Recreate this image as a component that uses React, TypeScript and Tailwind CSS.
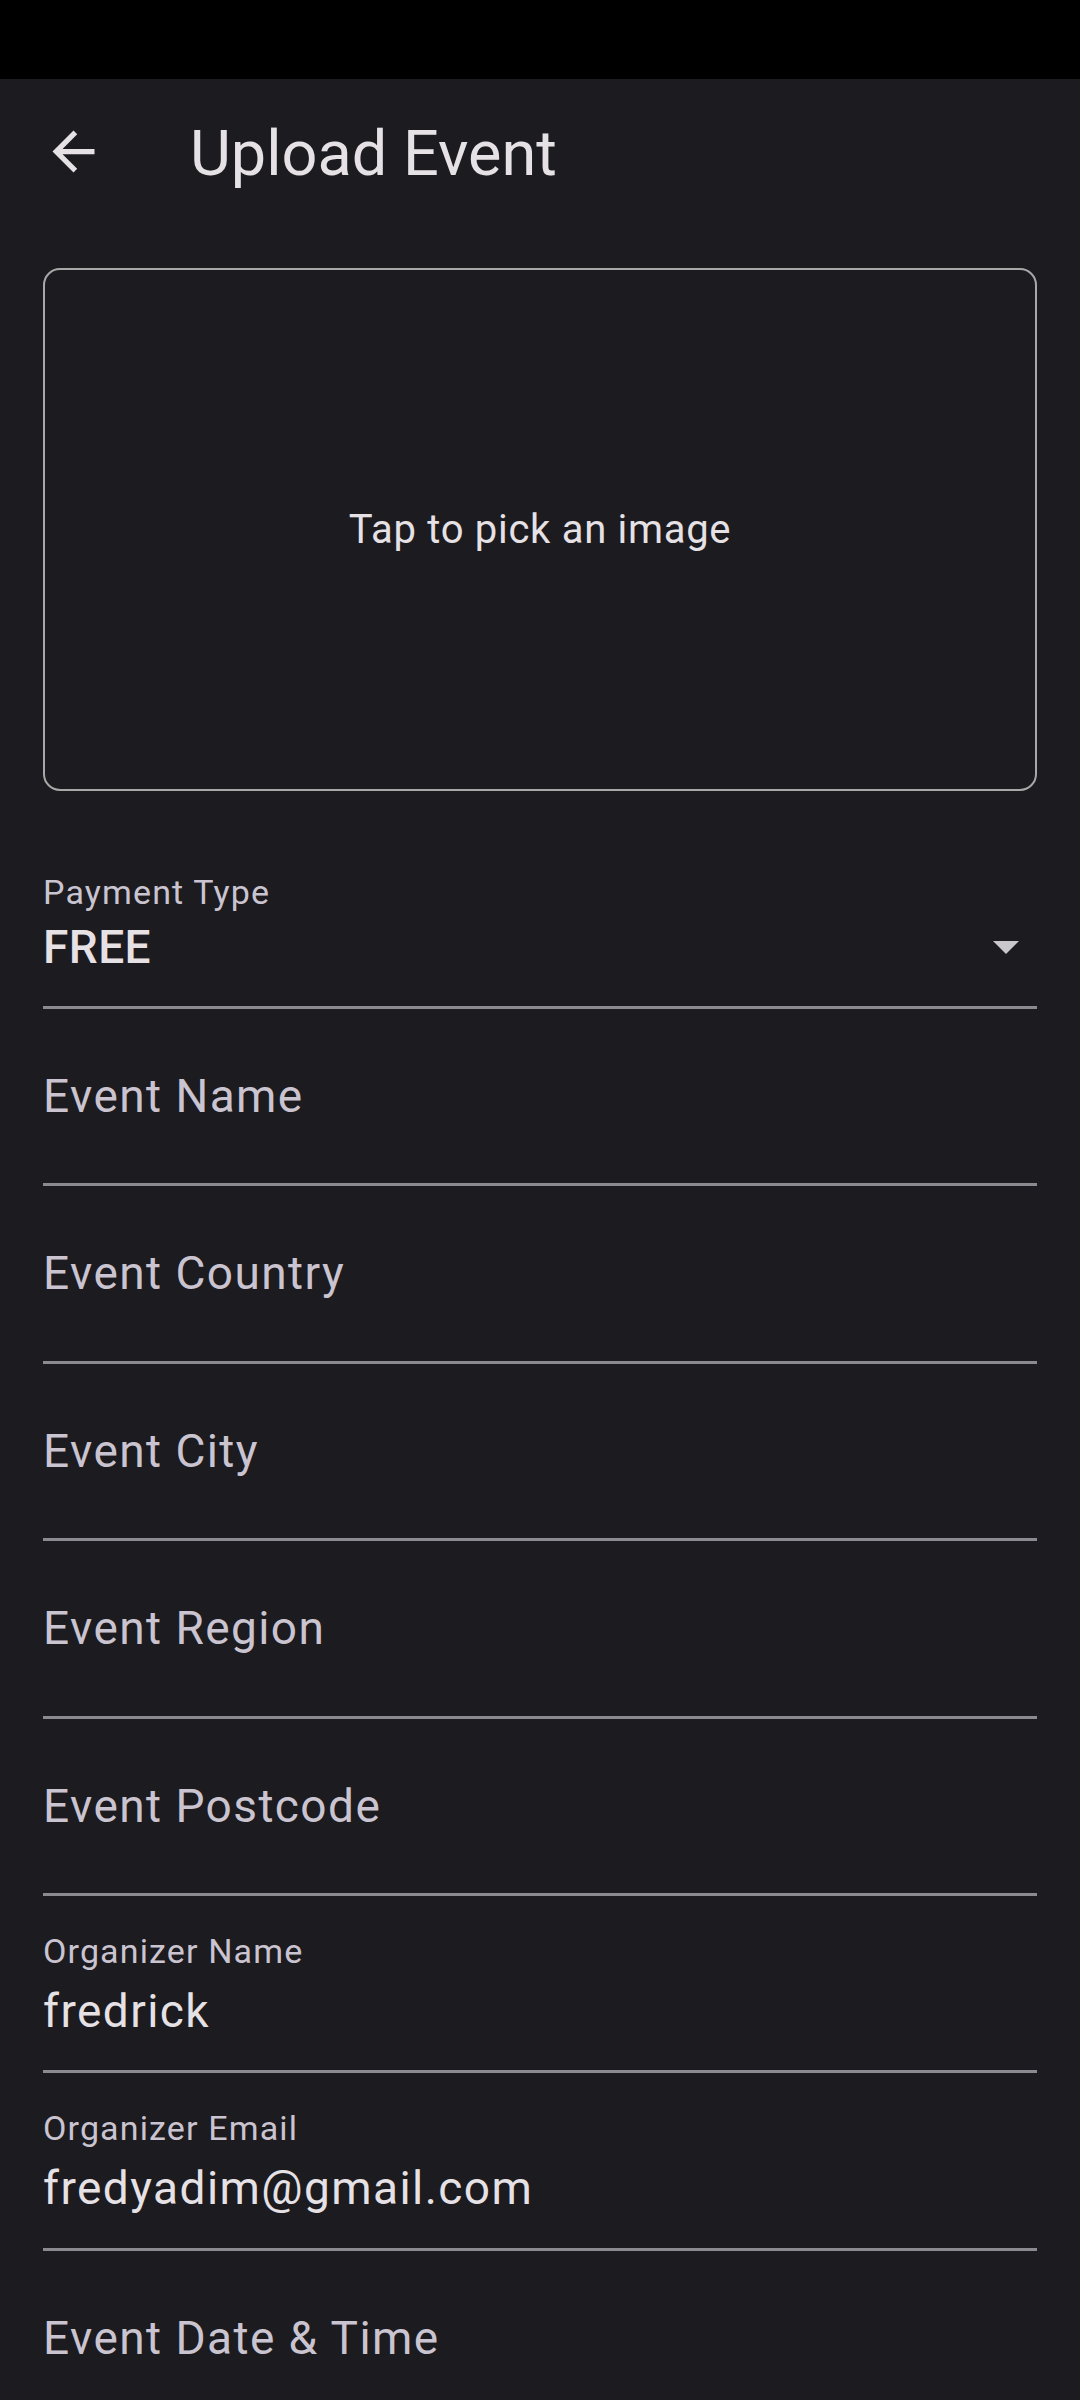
import React from "react";

interface PropsField {
  label: string;
  value?: string;
}

function ArrowBack() {
  return (
    <svg viewBox="0 0 24 24" className="size-[63px] shrink-0 fill-[#e6e1e5]">
      <path d="M20 11H7.83l5.59-5.59L12 4l-8 8 8 8 1.41-1.41L7.83 13H20v-2z" />
    </svg>
  );
}

function Field({ label, value }: PropsField) {
  if (!value) {
    return (
      <div className="h-[177.4px] border-b-[3px] border-[#8c8a91] pt-[64px]">
        <p className="text-[46px] leading-[46px] tracking-[1.43px] text-[#cac4d0]">
          {label}
        </p>
      </div>
    );
  }
  return (
    <div className="h-[177.4px] border-b-[3px] border-[#8c8a91] pt-[38px]">
      <p className="text-[34px] leading-[34px] tracking-[1.14px] text-[#cac4d0]">
        {label}
      </p>
      <p className="mt-[20px] text-[46px] leading-[46px] tracking-[1.43px] text-[#e6e1e5]">
        {value}
      </p>
    </div>
  );
}

export default function App() {
  return (
    <div
      className="h-[2400px] w-[1080px] overflow-hidden bg-[#1c1b1f]"
      style={{ fontFamily: "Roboto, 'Noto Sans', sans-serif" }}
    >
      <div className="h-[79px] bg-black" />

      <div className="flex h-[146px] items-start pl-[42px]">
        <div className="mt-[41px]">
          <ArrowBack />
        </div>
        <h1 className="ml-[85px] mt-[43px] text-[63px] leading-[63px] text-[#e6e1e5]">
          Upload Event
        </h1>
      </div>

      <div className="px-[43px] pt-[43px]">
        <div className="flex h-[523px] items-center justify-center rounded-[17px] border-2 border-[#a8a8a8]">
          <span className="text-[40px] leading-[40px] tracking-[0.7px] text-[#e6e1e5]">
            Tap to pick an image
          </span>
        </div>

        <div className="h-[218px] border-b-[3px] border-[#8c8a91] pt-[84px]">
          <p className="text-[34px] leading-[34px] tracking-[1.14px] text-[#cac4d0]">
            Payment Type
          </p>
          <div className="mt-[15px] flex items-center justify-between">
            <span className="text-[46px] font-medium leading-[46px] tracking-[0.43px] text-[#e6e1e5]">
              FREE
            </span>
            <svg viewBox="0 0 26 13" className="mr-[18px] h-[13px] w-[26px] fill-[#c9c6cc]">
              <polygon points="0,0 26,0 13,13" />
            </svg>
          </div>
        </div>

        <Field label="Event Name" />
        <Field label="Event Country" />
        <Field label="Event City" />
        <Field label="Event Region" />
        <Field label="Event Postcode" />
        <Field label="Organizer Name" value="fredrick" />
        <Field label="Organizer Email" value="fredyadim@gmail.com" />
        <Field label="Event Date & Time" />
      </div>
    </div>
  );
}
